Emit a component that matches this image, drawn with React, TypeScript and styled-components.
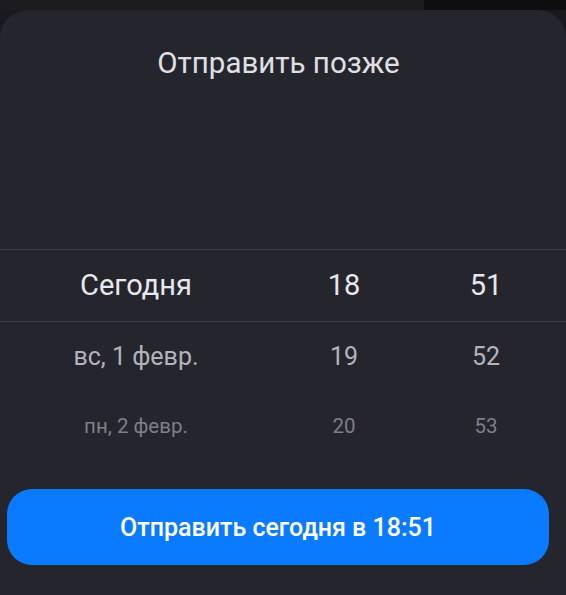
import React from "react";
import styled, { createGlobalStyle } from "styled-components";

const Global = createGlobalStyle`
  html, body { margin: 0; padding: 0; background: #1a1a1e; }
  body { font-family: Roboto, "Noto Sans", "Liberation Sans", sans-serif; }
  * { box-sizing: border-box; }
`;

const Screen = styled.div`
  width: 566px;
  height: 595px;
  display: flex;
  flex-direction: column;
  overflow: hidden;
  background: #1a1a1e;
`;

const Backdrop = styled.div`
  height: 10px;
  display: grid;
  grid-template-columns: 424px 1fr;
  flex: none;
`;

const BackdropPart = styled.div<{ $tone: string }>`
  background: ${(p) => p.$tone};
`;

const Sheet = styled.div`
  flex: 1;
  display: flex;
  flex-direction: column;
  background: #25252d;
  border-radius: 28px 28px 0 0;
`;

const Title = styled.h1`
  margin: 0;
  padding: 38px 9px 0 0;
  height: 97px;
  font-size: 29.5px;
  line-height: 30px;
  font-weight: 400;
  color: #e0e0e4;
  text-align: center;
`;

const Picker = styled.div`
  display: flex;
  flex-direction: column;
`;

const Row = styled.div<{ $height: number; $selected?: boolean }>`
  display: grid;
  grid-template-columns: 272px 144px 140px;
  align-items: center;
  height: ${(p) => p.$height}px;
  border-top: ${(p) => (p.$selected ? "1px solid #3c3c44" : "none")};
  border-bottom: ${(p) => (p.$selected ? "1px solid #3c3c44" : "none")};
`;

const Cell = styled.div<{ $size: number; $color: string }>`
  text-align: center;
  font-size: ${(p) => p.$size}px;
  color: ${(p) => p.$color};
  line-height: 1;
  white-space: nowrap;
`;

const Footer = styled.div`
  padding: 26px 17px 0 7px;
`;

const SendButton = styled.button`
  width: 100%;
  height: 76px;
  border: none;
  border-radius: 25px;
  background: #0a7bff;
  color: #ffffff;
  font-family: Roboto, "Noto Sans", "Liberation Sans", sans-serif;
  font-size: 25px;
  font-weight: 500;
  cursor: pointer;
`;

type Level = { size: number; color: string; height: number; selected?: boolean };

const levels: Level[] = [
  { size: 29, color: "#e8e8ec", height: 73, selected: true },
  { size: 25, color: "#b3b3ba", height: 68 },
  { size: 20.5, color: "#7f7f88", height: 73 },
];

const rows = [
  ["Сегодня", "18", "51"],
  ["вс, 1 февр.", "19", "52"],
  ["пн, 2 февр.", "20", "53"],
];

export default function App() {
  return (
    <>
      <Global />
      <Screen>
        <Backdrop>
          <BackdropPart $tone="#1b1b20" />
          <BackdropPart $tone="#0e0e10" />
        </Backdrop>
        <Sheet>
          <Title>Отправить позже</Title>
          <Picker>
            <Row $height={71} />
            <Row $height={71} />
            {rows.map((r, i) => {
              const l = levels[i];
              return (
                <Row key={i} $height={l.height} $selected={l.selected}>
                  {r.map((t, j) => (
                    <Cell key={j} $size={l.size} $color={l.color}>
                      {t}
                    </Cell>
                  ))}
                </Row>
              );
            })}
          </Picker>
          <Footer>
            <SendButton>Отправить сегодня в 18:51</SendButton>
          </Footer>
        </Sheet>
      </Screen>
    </>
  );
}
